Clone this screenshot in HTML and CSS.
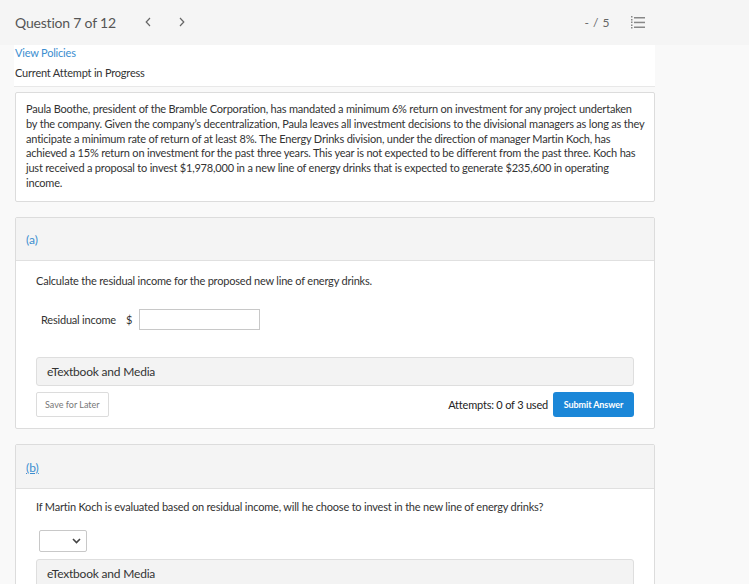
FILE: index.html
```html
<!DOCTYPE html>
<html>
<head>
<meta charset="utf-8">
<link rel="stylesheet" href="styles.css">
</head>
<body>
<div class="topbar">
  <div class="topbar-inner">
    <div class="qtitle">Question 7 of 12</div>
    <svg class="nav prev" width="6" height="10" viewBox="0 0 6 10"><path d="M5 1 L1.2 5 L5 9" stroke="#666" stroke-width="1.2" fill="none"/></svg>
    <svg class="nav next" width="6" height="10" viewBox="0 0 6 10"><path d="M1 1 L4.8 5 L1 9" stroke="#666" stroke-width="1.2" fill="none"/></svg>
    <div class="spacer"></div>
    <div class="score">- / 5</div>
    <svg class="listicon" width="14" height="13" viewBox="0 0 14 13">
      <g fill="#888">
        <rect x="0" y="0" width="1.5" height="1.5"/>
        <rect x="0" y="3" width="1.5" height="1.5"/>
        <rect x="0" y="5.5" width="1.5" height="1.5"/>
        <rect x="0" y="8.5" width="1.5" height="1.5"/>
        <rect x="0" y="11" width="1.5" height="1.5"/>
        <rect x="3" y="1" width="11" height="1.5"/>
        <rect x="3" y="5.7" width="11" height="1.5"/>
        <rect x="3" y="10.5" width="11" height="1.5"/>
      </g>
    </svg>
  </div>
</div>
<div class="main">
  <div class="header">
    <a class="policies">View Policies</a>
    <div class="attempt">Current Attempt in Progress</div>
  </div>
  <div class="card problem">
    Paula Boothe, president of the Bramble Corporation, has mandated a minimum 6% return on investment for any project undertaken<br>
    by the company. Given the company’s decentralization, Paula leaves all investment decisions to the divisional managers as long as they<br>
    anticipate a minimum rate of return of at least 8%. The Energy Drinks division, under the direction of manager Martin Koch, has<br>
    achieved a 15% return on investment for the past three years. This year is not expected to be different from the past three. Koch has<br>
    just received a proposal to invest $1,978,000 in a new line of energy drinks that is expected to generate $235,600 in operating<br>
    income.
  </div>
  <div class="card part">
    <div class="part-head"><span class="plabel">(a)</span></div>
    <div class="part-body">
      <div class="qtext">Calculate the residual income for the proposed new line of energy drinks.</div>
      <div class="answer-row">
        <span class="alabel">Residual income</span>
        <span class="dollar">$</span>
        <span class="input"></span>
      </div>
      <div class="media">eTextbook and Media</div>
      <div class="actions">
        <span class="save">Save for Later</span>
        <div class="spacer"></div>
        <span class="attempts">Attempts: 0 of 3 used</span>
        <span class="submit">Submit Answer</span>
      </div>
    </div>
  </div>
  <div class="card part partb">
    <div class="part-head"><span class="plabel under">(b)</span></div>
    <div class="part-body">
      <div class="qtext">If Martin Koch is evaluated based on residual income, will he choose to invest in the new line of energy drinks?</div>
      <div class="select-row">
        <span class="select">
          <svg width="9" height="6" viewBox="0 0 9 6"><path d="M1 1 L4.5 4.5 L8 1" stroke="#444" stroke-width="1.6" fill="none"/></svg>
        </span>
      </div>
      <div class="media">eTextbook and Media</div>
    </div>
  </div>
</div>
</body>
</html>
```
FILE: styles.css
```css
html, body {
  margin: 0;
  padding: 0;
}
body {
  background: #f9f9f9;
  font-family: Lato, "Open Sans", sans-serif;
  color: #333;
  width: 749px;
  height: 584px;
  overflow: hidden;
}
.topbar {
  background: #f5f5f5;
  height: 45px;
}
.topbar-inner {
  width: 655px;
  height: 44px;
  display: flex;
  align-items: center;
  box-sizing: border-box;
  padding-left: 15px;
}
.qtitle {
  font-size: 14px;
  color: #555;
  letter-spacing: -0.2px;
}
.nav {
  display: block;
}
.prev { margin-left: 29px; }
.next { margin-left: 28px; }
.spacer { flex: 1; }
.score {
  font-size: 12px;
  color: #666;
  letter-spacing: 0.5px;
}
.listicon {
  margin-left: 21px;
  margin-right: 10px;
}
.main {
  width: 641px;
  margin-left: 14px;
}
.header {
  background: #fff;
  height: 42px;
  border-bottom: 1px solid #e8e8e8;
  padding-left: 1px;
  box-sizing: border-box;
  font-size: 11px;
  letter-spacing: -0.2px;
}
.policies {
  display: block;
  color: #3b8ed0;
  line-height: 15px;
}
.attempt {
  color: #333;
  line-height: 15px;
  margin-top: 5px;
}
.card {
  background: #fff;
  border: 1px solid #dcdcdc;
  border-radius: 2px;
  margin-left: 1px;
  width: 640px;
  box-sizing: border-box;
}
.problem {
  margin-top: 5px;
  padding: 9px 2px 10px 10px;
  font-size: 11px;
  line-height: 14.8px;
  letter-spacing: -0.2px;
  color: #333;
  white-space: nowrap;
}
.part {
  margin-top: 15px;
}
.part-head {
  height: 42px;
  background: #f4f4f4;
  border-bottom: 1px solid #e0e0e0;
  display: flex;
  align-items: center;
  padding-left: 10px;
}
.plabel {
  color: #3b8ed0;
  font-size: 12px;
  margin-top: 2px;
}
.plabel.under {
  text-decoration: underline;
}
.part-body {
  padding: 13px 20px 11px 20px;
  letter-spacing: -0.2px;
}
.qtext {
  font-size: 11px;
  line-height: 14px;
  color: #333;
}
.answer-row {
  display: flex;
  align-items: center;
  margin-top: 21px;
  padding-left: 5px;
  font-size: 11px;
}
.alabel { color: #333; }
.dollar { margin-left: 10px; color: #333; }
.input {
  display: inline-block;
  width: 119px;
  height: 19px;
  border: 1px solid #c8c8c8;
  margin-left: 7px;
  background: #fff;
}
.media {
  margin-top: 27px;
  height: 27px;
  background: #f3f3f3;
  border: 1px solid #dedede;
  border-radius: 3px;
  display: flex;
  align-items: center;
  padding-left: 10px;
  font-size: 12px;
  color: #333;
}
.actions {
  display: flex;
  align-items: center;
  margin-top: 6px;
}
.save {
  display: inline-flex;
  align-items: center;
  height: 23px;
  padding: 0 8px;
  border: 1px solid #dcdcdc;
  border-radius: 2px;
  font-size: 9px;
  color: #777;
  letter-spacing: 0;
}
.attempts {
  font-size: 11px;
  color: #222;
  margin-right: 5px;
}
.submit {
  display: inline-flex;
  align-items: center;
  justify-content: center;
  width: 81px;
  height: 25px;
  background: #1b87d8;
  color: #fff;
  border-radius: 3px;
  font-size: 9px;
  font-weight: bold;
  letter-spacing: -0.1px;
}
.partb .part-head {
  height: 43px;
}
.partb .part-body {
  padding-top: 11px;
}
.select-row {
  margin-top: 16px;
  padding-left: 3px;
}
.select {
  display: flex;
  justify-content: flex-end;
  align-items: center;
  width: 46px;
  height: 20px;
  border: 1px solid #c8c8c8;
  border-radius: 2px;
}
.select svg {
  margin-right: 5px;
}
.partb .media {
  margin-top: 7px;
}
```
